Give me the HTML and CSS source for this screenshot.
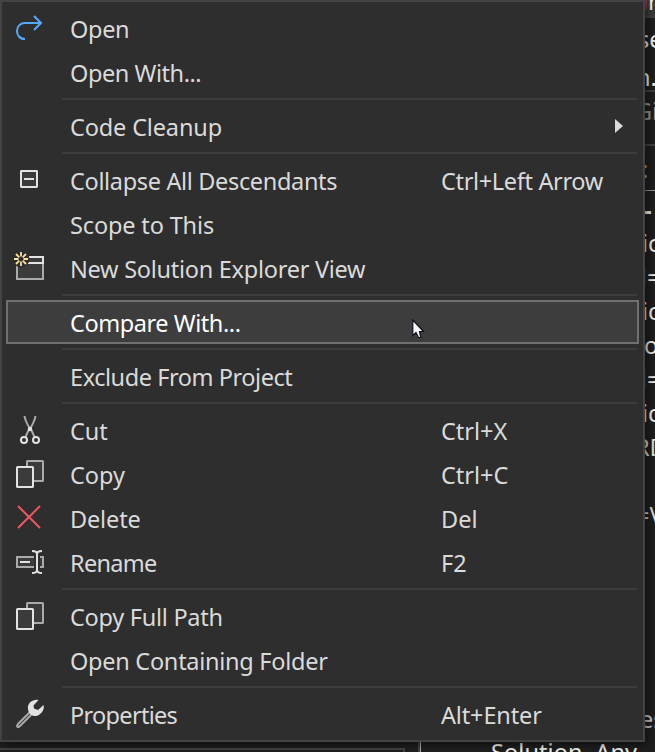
FILE: index.html
```html
<!DOCTYPE html>
<html lang="en">
<head>
<meta charset="utf-8">
<title>Context menu</title>
<link rel="stylesheet" href="styles.css">
</head>
<body>
<svg class="backdrop" width="655" height="752" viewBox="0 0 655 752">
  <rect x="645" width="10" height="16" fill="#3b3b3b"/>
  <path d="M645 17H655M645 91H655M645 145H655" stroke="#414141" stroke-width="2"/>
  <path d="M645 190.500H655" stroke="#929292"/>
  <path d="M646 0V10" stroke="#8b3034" stroke-width="2"/>
  <path d="M645.500 268V286M645.500 370V388" stroke="#5c2022"/>
  <g fill="#f1f1f1">
    <text x="648" y="10">r</text>
    <text x="638" y="48">se</text>
    <text x="636" y="86">n.</text>
    <text x="635" y="120" fill="#929292">Gi</text>
    <text x="642" y="178" fill="#aaa">:</text>
    <text x="644" y="219" font-weight="bold">-</text>
    <text x="642" y="252">ic</text>
    <text x="647" y="286">=</text>
    <text x="642" y="320">ic</text>
    <text x="644" y="354">o</text>
    <text x="647" y="388">=</text>
    <text x="642" y="422">ic</text>
    <text x="635" y="456" fill="#dcdcdc">RD</text>
    <text x="636" y="524" fill="#dcdcdc">=V</text>
    <text x="640" y="728" fill="#c8c8c8">es</text>
    <text x="491" y="761" textLength="146">Solution, Any</text>
  </g>
  <path d="M0 749H404V752" fill="none" stroke="#434343" stroke-width="2"/>
  <path d="M419 742V752" stroke="#434343" stroke-width="2"/>
  <path d="M420.500 742V752" stroke="#aaa"/>
</svg>

<nav class="menu">
  <div class="item">
    <svg class="icon" viewBox="0 0 32 32"><path d="M11 27C5.500 27 3 23 3 19C3 14 6.500 11 11 11H27M20 4L27 11L20 18" fill="none" stroke="#55aaff" stroke-width="2"/></svg>
    <span class="label snug">Open</span>
  </div>
  <div class="item"><span class="label tight">Open With...</span></div>
  <div class="sep"></div>
  <div class="item"><span class="label slight">Code Cleanup</span><span class="arrow"></span></div>
  <div class="sep"></div>
  <div class="item">
    <svg class="icon" viewBox="0 0 32 32"><rect x="7" y="7" width="16" height="16" rx=".4" fill="#3b3b3b" stroke="#e2e2e2" stroke-width="2"/><path d="M10 15H20" stroke="#e2e2e2" stroke-width="2"/></svg>
    <span class="label snug">Collapse All Descendants</span><span class="key snug">Ctrl+Left Arrow</span>
  </div>
  <div class="item"><span class="label slight">Scope to This</span></div>
  <div class="item">
    <svg class="icon" viewBox="0 0 32 32"><path d="M3 11V27H29V11" fill="#3b3b3b" stroke="#aaa" stroke-width="2"/><path d="M12 5H29V11H12Z" fill="#3b3b3b" stroke="#e2e2e2" stroke-width="2"/><circle cx="7" cy="7" r="8.500" fill="#2e2e2e"/><path d="M7 0V4.500M7 9.500V14M0 7H4.500M9.500 7H14M2 2L5.300 5.300M12 2L8.700 5.300M2 12L5.300 8.700M12 12L8.700 8.700" stroke="#ffe0a0" stroke-width="1.800"/></svg>
    <span class="label mild">New Solution Explorer View</span>
  </div>
  <div class="sep"></div>
  <div class="item active"><span class="label tight">Compare With...</span></div>
  <div class="sep"></div>
  <div class="item"><span class="label tight">Exclude From Project</span></div>
  <div class="sep"></div>
  <div class="item">
    <svg class="icon" viewBox="0 0 32 32"><g fill="none" stroke-width="2"><path d="M10.500 2C11 6 12.500 9 16 15M21.500 2C21 6 19.500 9 16 15" stroke="#aaa"/><path d="M16 13L11.500 23M16 13L20.500 23" stroke="#aaa"/><circle cx="10" cy="26" r="3" stroke="#e2e2e2"/><circle cx="22" cy="26" r="3" stroke="#e2e2e2"/></g><circle cx="16" cy="15" r="2.200" fill="#e2e2e2"/></svg>
    <span class="label">Cut</span><span class="key">Ctrl+X</span>
  </div>
  <div class="item">
    <svg class="icon" viewBox="0 0 32 32"><rect x="13" y="3" width="16" height="20" rx=".6" fill="#3b3b3b" stroke="#aaa" stroke-width="2"/><rect x="3" y="9" width="16" height="20" rx=".6" fill="#3b3b3b" stroke="#e2e2e2" stroke-width="2"/></svg>
    <span class="label">Copy</span><span class="key">Ctrl+C</span>
  </div>
  <div class="item">
    <svg class="icon" viewBox="0 0 32 32"><path d="M4 4L26 26M26 4L4 26" stroke="#f05562" stroke-width="2"/></svg>
    <span class="label slight">Delete</span><span class="key">Del</span>
  </div>
  <div class="item">
    <svg class="icon" viewBox="0 0 32 32"><path d="M20 11H3V21H20M26 11H29V21H26" fill="#3b3b3b" stroke="#aaa" stroke-width="2"/><path d="M6 16H16M18 5C21 5 23 6 23 8C23 6 25 5 28 5M23 8V24M18 27C21 27 23 26 23 24C23 26 25 27 28 27" fill="none" stroke="#e2e2e2" stroke-width="2"/></svg>
    <span class="label tightest">Rename</span><span class="key">F2</span>
  </div>
  <div class="sep"></div>
  <div class="item">
    <svg class="icon" viewBox="0 0 32 32"><rect x="13" y="3" width="16" height="20" rx=".6" fill="#3b3b3b" stroke="#aaa" stroke-width="2"/><rect x="3" y="9" width="16" height="20" rx=".6" fill="#3b3b3b" stroke="#e2e2e2" stroke-width="2"/></svg>
    <span class="label mild">Copy Full Path</span>
  </div>
  <div class="item"><span class="label mild">Open Containing Folder</span></div>
  <div class="sep"></div>
  <div class="item">
    <svg class="icon" viewBox="0 0 32 32"><path d="M16 14L4 26C2 29 4 30 6 28L18 16M17 17L7 27" fill="none" stroke="#aaa" stroke-width="2"/><path d="M24.500 2C19 1 13 5 14 11C14.500 18 22 20 26 16C29 14 30.500 10 29.500 7L24 12L20 10.500L19.500 7.500Z" fill="#e2e2e2"/></svg>
    <span class="label tightest">Properties</span><span class="key slight">Alt+Enter</span>
  </div>
</nav>

<svg class="cursor" width="14" height="22" viewBox="0 0 14 22"><path d="M.8 1V16.500L4 13.500L6.500 18.500H8.800L7.500 12.500H11.500Z" fill="#fff" stroke="#10101c" stroke-width="1.200"/></svg>
</body>
</html>
```
FILE: styles.css
```css
body {
  margin: 0;
  width: 655px;
  height: 752px;
  overflow: hidden;
  background: #1f1f1f;
  font: 23.5px/32px "Noto Sans", "Open Sans", sans-serif;
  color: #dadada;
}

.backdrop {
  position: absolute;
  left: 0;
  top: 0;
}

.menu {
  position: relative;
  box-sizing: border-box;
  width: 645px;
  height: 742px;
  padding: 4px;
  border: 2px solid #434343;
  background: #2e2e2e;
  box-shadow: 3px 3px 8px rgba(0, 0, 0, .5);
}

.item {
  box-sizing: border-box;
  display: grid;
  grid-template-columns: 56px 371px 1fr;
  align-items: center;
  width: 633px;
  height: 44px;
  padding-left: 6px;
  border: 2px solid transparent;
}

.active {
  border-color: #707070;
  background: #3d3d3d;
  color: #fff;
}

.icon {
  grid-column: 1;
  width: 32px;
  height: 32px;
  overflow: visible;
}

.label {
  grid-column: 2;
  padding-top: 2px;
  white-space: nowrap;
}

.key {
  grid-column: 3;
  padding-top: 2px;
  white-space: nowrap;
}

.slight { letter-spacing: -.15px; }
.mild { letter-spacing: -.27px; }
.snug { letter-spacing: -.34px; }
.tight { letter-spacing: -.44px; }
.tightest { letter-spacing: -.7px; }

.arrow {
  grid-column: 3;
  margin-left: 174px;
  width: 0;
  height: 0;
  border: 7px solid transparent;
  border-left: 8px solid #dadada;
  border-right: 0;
}

.sep {
  height: 2px;
  margin: 4px 0 4px 56px;
  width: 575px;
  background: #3d3d3d;
}

.cursor {
  position: absolute;
  left: 412px;
  top: 319px;
}
```
